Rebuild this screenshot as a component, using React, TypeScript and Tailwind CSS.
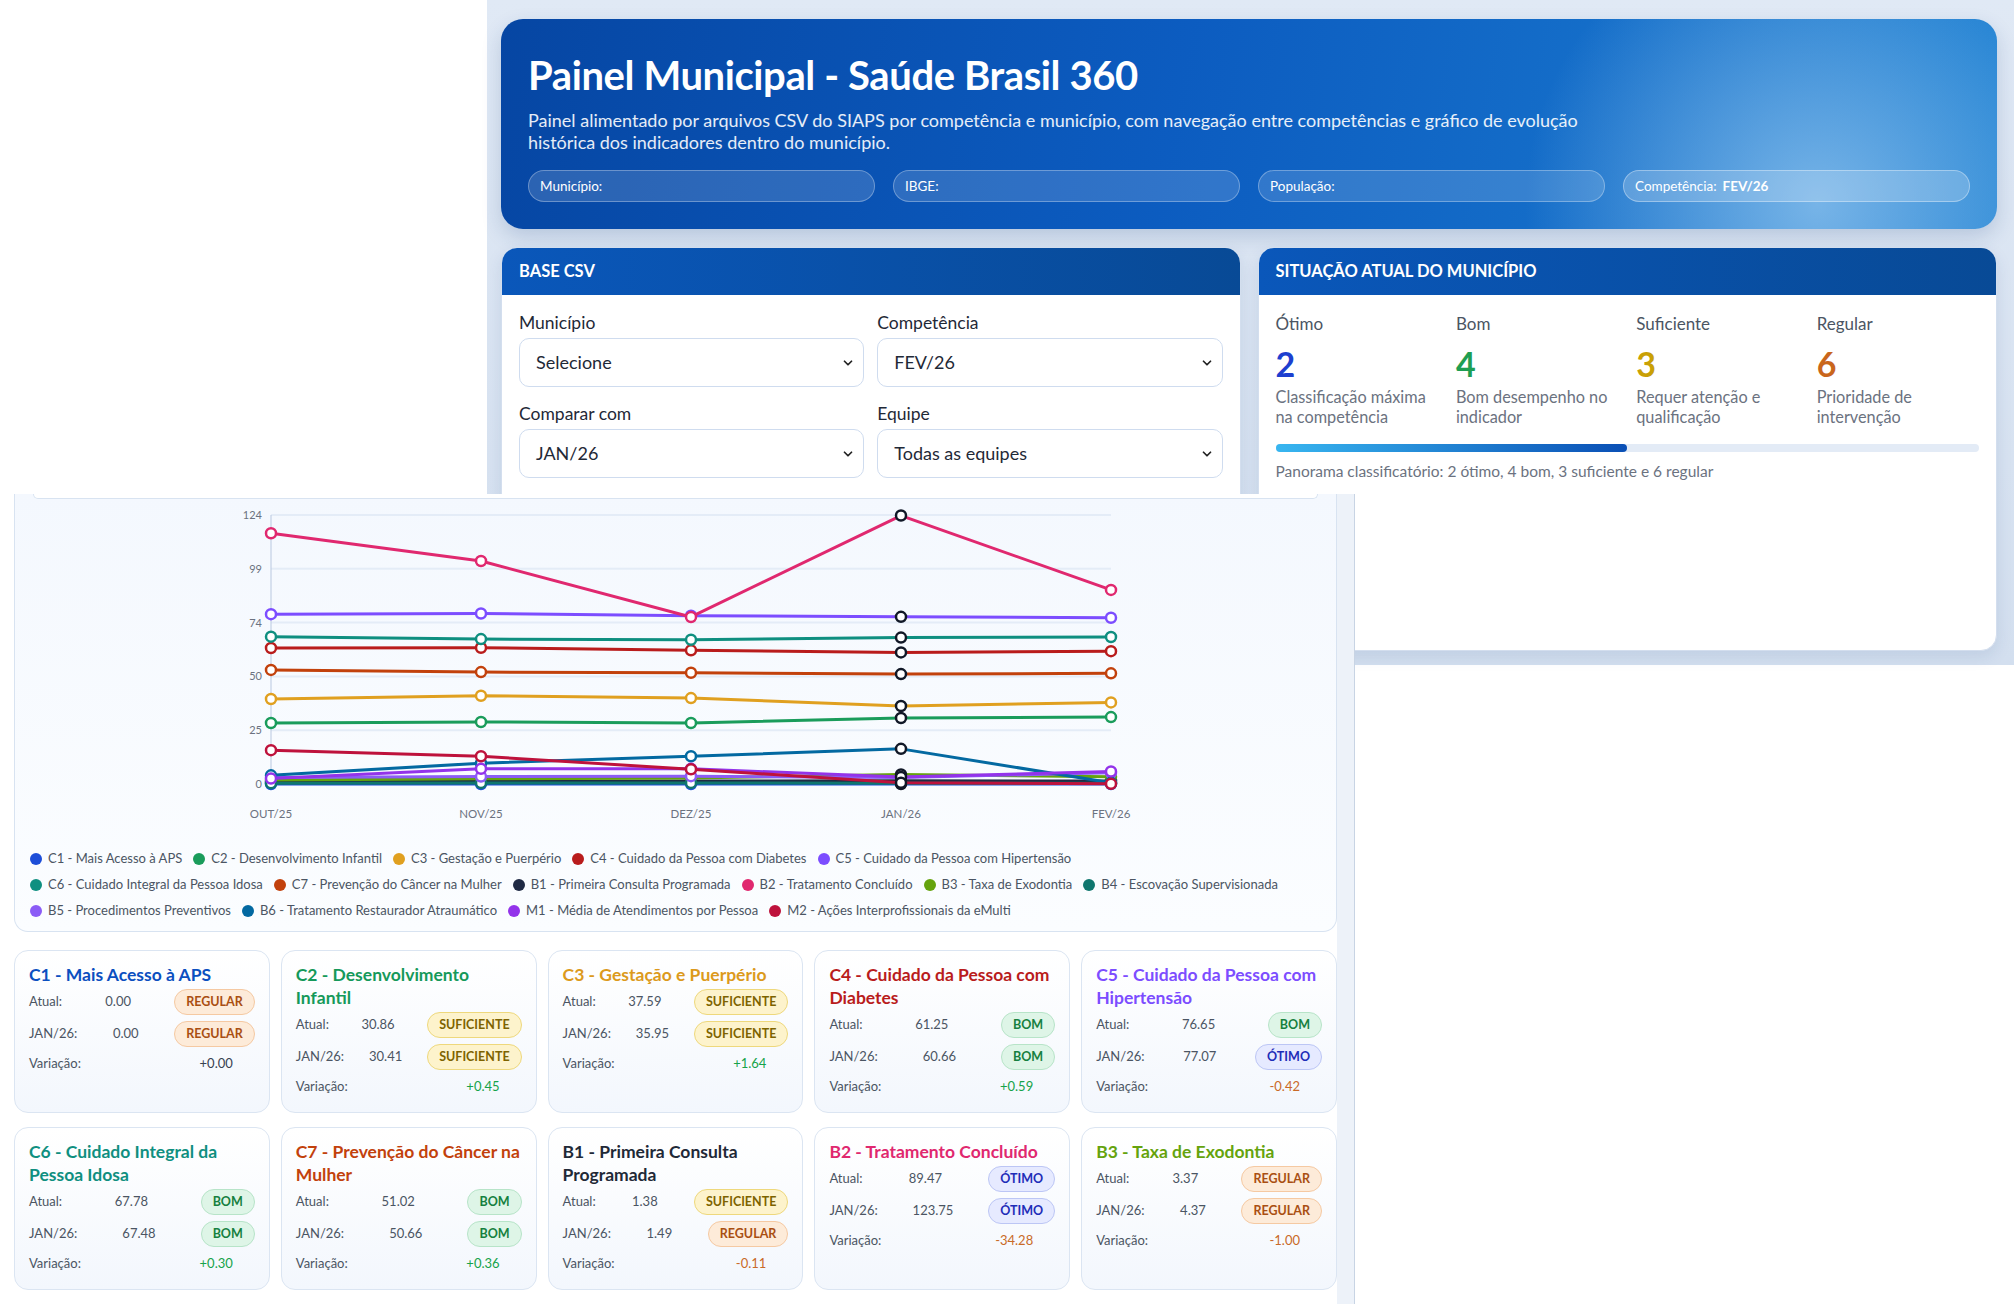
import { ChevronDown } from 'lucide-react';

const months = ['OUT/25', 'NOV/25', 'DEZ/25', 'JAN/26', 'FEV/26'];

interface Series {
  name: string;
  color: string;
  data: number[];
}

const series: Series[] = [
  { name: 'C1 - Mais Acesso à APS', color: '#1d4ed8', data: [0, 0, 0, 0, 0] },
  { name: 'C2 - Desenvolvimento Infantil', color: '#1a9c5b', data: [28.1, 28.6, 28.1, 30.41, 30.86] },
  { name: 'C3 - Gestação e Puerpério', color: '#e0a020', data: [39.2, 40.7, 39.6, 35.95, 37.59] },
  { name: 'C4 - Cuidado da Pessoa com Diabetes', color: '#b91c1c', data: [62.7, 62.8, 61.6, 60.66, 61.25] },
  { name: 'C5 - Cuidado da Pessoa com Hipertensão', color: '#7c4dff', data: [78.3, 78.6, 77.6, 77.07, 76.65] },
  { name: 'C6 - Cuidado Integral da Pessoa Idosa', color: '#0f8f80', data: [67.9, 66.8, 66.5, 67.48, 67.78] },
  { name: 'C7 - Prevenção do Câncer na Mulher', color: '#c2410c', data: [52.6, 51.6, 51.3, 50.66, 51.02] },
  { name: 'B1 - Primeira Consulta Programada', color: '#1f2a44', data: [1.2, 1.3, 1.4, 1.49, 1.38] },
  { name: 'B2 - Tratamento Concluído', color: '#e0286f', data: [115.6, 102.8, 77.0, 123.75, 89.47] },
  { name: 'B3 - Taxa de Exodontia', color: '#65a30d', data: [1.8, 2.4, 2.8, 4.37, 3.37] },
  { name: 'B4 - Escovação Supervisionada', color: '#0f766e', data: [0.4, 0.5, 0.5, 0.3, 0.4] },
  { name: 'B5 - Procedimentos Preventivos', color: '#8b5cf6', data: [3.0, 3.4, 3.6, 3.0, 5.2] },
  { name: 'B6 - Tratamento Restaurador Atraumático', color: '#0369a1', data: [4.0, 9.6, 12.8, 16.2, 0.6] },
  { name: 'M1 - Média de Atendimentos por Pessoa', color: '#9333ea', data: [2.5, 7.0, 7.0, 3.2, 5.8] },
  { name: 'M2 - Ações Interprofissionais da eMulti', color: '#be123c', data: [15.6, 12.8, 6.8, 0.6, 0.1] },
];

const legendRows = [
  [0, 1, 2, 3, 4],
  [5, 6, 7, 8, 9, 10],
  [11, 12, 13, 14],
];

type Level = 'REGULAR' | 'SUFICIENTE' | 'BOM' | 'ÓTIMO';

const badgeStyles: Record<Level, string> = {
  REGULAR: 'bg-[#fdebd9] border-[#f5c9a2] text-[#a94f12]',
  SUFICIENTE: 'bg-[#fdf3cc] border-[#eed87c] text-[#7d6300]',
  BOM: 'bg-[#def5e7] border-[#b7e4c8] text-[#16803f]',
  ÓTIMO: 'bg-[#e6eaff] border-[#bcc6f5] text-[#1e2db8]',
};

interface Indicator {
  title: string;
  color: string;
  atual: string;
  atualLevel: Level;
  prev: string;
  prevLevel: Level;
  diff: string;
}

const indicators: Indicator[] = [
  { title: 'C1 - Mais Acesso à APS', color: '#0b4fc0', atual: '0.00', atualLevel: 'REGULAR', prev: '0.00', prevLevel: 'REGULAR', diff: '+0.00' },
  { title: 'C2 - Desenvolvimento Infantil', color: '#15995a', atual: '30.86', atualLevel: 'SUFICIENTE', prev: '30.41', prevLevel: 'SUFICIENTE', diff: '+0.45' },
  { title: 'C3 - Gestação e Puerpério', color: '#dc9a1c', atual: '37.59', atualLevel: 'SUFICIENTE', prev: '35.95', prevLevel: 'SUFICIENTE', diff: '+1.64' },
  { title: 'C4 - Cuidado da Pessoa com Diabetes', color: '#b91c1c', atual: '61.25', atualLevel: 'BOM', prev: '60.66', prevLevel: 'BOM', diff: '+0.59' },
  { title: 'C5 - Cuidado da Pessoa com Hipertensão', color: '#7c4dff', atual: '76.65', atualLevel: 'BOM', prev: '77.07', prevLevel: 'ÓTIMO', diff: '-0.42' },
  { title: 'C6 - Cuidado Integral da Pessoa Idosa', color: '#0f8f80', atual: '67.78', atualLevel: 'BOM', prev: '67.48', prevLevel: 'BOM', diff: '+0.30' },
  { title: 'C7 - Prevenção do Câncer na Mulher', color: '#c2410c', atual: '51.02', atualLevel: 'BOM', prev: '50.66', prevLevel: 'BOM', diff: '+0.36' },
  { title: 'B1 - Primeira Consulta Programada', color: '#1f2937', atual: '1.38', atualLevel: 'SUFICIENTE', prev: '1.49', prevLevel: 'REGULAR', diff: '-0.11' },
  { title: 'B2 - Tratamento Concluído', color: '#e0286f', atual: '89.47', atualLevel: 'ÓTIMO', prev: '123.75', prevLevel: 'ÓTIMO', diff: '-34.28' },
  { title: 'B3 - Taxa de Exodontia', color: '#65a30d', atual: '3.37', atualLevel: 'REGULAR', prev: '4.37', prevLevel: 'REGULAR', diff: '-1.00' },
];

const statusCols = [
  { label: 'Ótimo', value: 2, color: 'text-[#1d3fcf]', desc: 'Classificação máxima na competência' },
  { label: 'Bom', value: 4, color: 'text-[#1e9e52]', desc: 'Bom desempenho no indicador' },
  { label: 'Suficiente', value: 3, color: 'text-[#c9a005]', desc: 'Requer atenção e qualificação' },
  { label: 'Regular', value: 6, color: 'text-[#c9661c]', desc: 'Prioridade de intervenção' },
];

// chart geometry (px inside the svg)
const X0 = 256;
const XSTEP = 210;
const Y0 = 285;
const YMAX = 124;
const YSPAN = 269;
const yOf = (v: number) => Y0 - (v / YMAX) * YSPAN;

function Select({ value }: { value: string }) {
  return (
    <div className="mt-[3px] flex h-[49px] items-center justify-between rounded-[10px] border-[1.5px] border-[#cfdcef] bg-white pl-[16px] pr-[8px] text-[18px] text-[#1f2937]">
      <span>{value}</span>
      <ChevronDown size={14} strokeWidth={3} className="text-[#222]" />
    </div>
  );
}

function Field({ label, value }: { label: string; value: string }) {
  return (
    <div>
      <div className="text-[17.5px] leading-[24px] text-[#1f2937]">{label}</div>
      <Select value={value} />
    </div>
  );
}

function Chart() {
  return (
    <svg width="1321" height="347" className="block">
      {[0, 1, 2, 3, 4, 5].map((k) => {
        const y = Y0 - k * (YSPAN / 5);
        return (
          <g key={k}>
            <line x1={X0} x2={X0 + XSTEP * 4} y1={y} y2={y} stroke="#e4ecf7" strokeWidth={2} />
            <text x={X0 - 9} y={y + 4} textAnchor="end" fontSize="11" fill="#6b7280">
              {Math.round((YMAX * k) / 5)}
            </text>
          </g>
        );
      })}
      <line x1={X0} x2={X0} y1={Y0 - YSPAN} y2={Y0} stroke="#b9c8e0" strokeWidth={1} />
      {months.map((m, i) => (
        <text key={m} x={X0 + i * XSTEP} y={319} textAnchor="middle" fontSize="11.5" fill="#6b7280">
          {m}
        </text>
      ))}
      {series.map((s) => (
        <g key={s.name}>
          <polyline
            points={s.data.map((v, i) => `${X0 + i * XSTEP},${yOf(v)}`).join(' ')}
            fill="none"
            stroke={s.color}
            strokeWidth={3}
            strokeLinejoin="round"
          />
          {s.data.map((v, i) => (
            <circle
              key={i}
              cx={X0 + i * XSTEP}
              cy={yOf(v)}
              r={5}
              fill="#fff"
              stroke={i === 3 ? '#111827' : s.color}
              strokeWidth={2.5}
            />
          ))}
        </g>
      ))}
    </svg>
  );
}

function Badge({ level }: { level: Level }) {
  return (
    <span className={`flex h-[26px] items-center rounded-full border px-[11px] text-[12.5px] font-bold ${badgeStyles[level]}`}>
      {level}
    </span>
  );
}

function IndicatorCard({ item }: { item: Indicator }) {
  const diffColor = item.diff === '+0.00' ? 'text-[#374151]' : item.diff.startsWith('+') ? 'text-[#16a34a]' : 'text-[#c96a28]';
  return (
    <div className="rounded-[14px] border border-[#dbe5f2] bg-[linear-gradient(180deg,#ffffff,#f3f7fd)] px-[14px] pb-[14px] pt-[12px]">
      <div className="text-[17.5px] font-bold leading-[23px]" style={{ color: item.color }}>
        {item.title}
      </div>
      <div className="mt-[3px] flex flex-col gap-[6px] text-[13px] text-[#4b5563]">
        <div className="flex h-[26px] items-center justify-between">
          <span>Atual:</span>
          <span>{item.atual}</span>
          <Badge level={item.atualLevel} />
        </div>
        <div className="flex h-[26px] items-center justify-between">
          <span>JAN/26:</span>
          <span>{item.prev}</span>
          <Badge level={item.prevLevel} />
        </div>
        <div className="flex h-[22px] items-center justify-between">
          <span>Variação:</span>
          <span className={`mr-[22px] ${diffColor}`}>{item.diff}</span>
        </div>
      </div>
    </div>
  );
}

export default function App() {
  return (
    <div className="relative h-[1304px] w-[2014px] overflow-hidden bg-white [font-family:Lato,'Noto_Sans',sans-serif]">
      {/* upper capture: header and filters */}
      <div className="absolute left-[487px] top-0 h-[665px] w-[1527px] bg-[linear-gradient(180deg,#e0e9f5,#d3dfef)] pl-[14px] pr-[17px] pt-[19px]">
        <div className="h-[210px] rounded-[22px] bg-[radial-gradient(circle_at_88%_88%,rgba(150,200,240,0.75),transparent_22%),linear-gradient(100deg,#0646a3_0%,#0c5cc0_45%,#1d80d2_100%)] px-[27px] pt-[32px] text-white shadow-[0_8px_20px_rgba(20,60,120,0.18)]">
          <h1 className="text-[40px] font-bold leading-[48px] tracking-[-0.01em]">Painel Municipal - Saúde Brasil 360</h1>
          <p className="mt-[10px] text-[18px] leading-[22px] text-white/90">
            Painel alimentado por arquivos CSV do SIAPS por competência e município, com navegação entre competências e gráfico de evolução
            <br />
            histórica dos indicadores dentro do município.
          </p>
          <div className="mt-[17px] flex gap-[18px]">
            {['Município:', 'IBGE:', 'População:'].map((p) => (
              <div key={p} className="flex h-[32px] flex-1 items-center rounded-full border border-white/30 bg-white/15 px-[11px] text-[13.5px]">
                {p}
              </div>
            ))}
            <div className="flex h-[32px] flex-1 items-center gap-[6px] rounded-full border border-white/35 bg-white/20 px-[11px] text-[13.5px]">
              Competência: <b>FEV/26</b>
            </div>
          </div>
        </div>

        <div className="mt-[18px] grid h-[404px] grid-cols-2 gap-[17px]">
          <div className="overflow-hidden rounded-[16px] border border-[#d3deee] bg-white shadow-[0_6px_16px_rgba(20,60,120,0.10)]">
            <div className="flex h-[47px] items-center bg-[linear-gradient(90deg,#0a57ba,#084a96)] px-[17px] text-[16.5px] font-bold text-white">
              BASE CSV
            </div>
            <div className="grid grid-cols-2 gap-x-[13px] gap-y-[15px] px-[17px] pt-[16px]">
              <Field label="Município" value="Selecione" />
              <Field label="Competência" value="FEV/26" />
              <Field label="Comparar com" value="JAN/26" />
              <Field label="Equipe" value="Todas as equipes" />
            </div>
          </div>

          <div className="overflow-hidden rounded-[16px] border border-[#d3deee] bg-white shadow-[0_6px_16px_rgba(20,60,120,0.10)]">
            <div className="flex h-[47px] items-center bg-[linear-gradient(90deg,#0a57ba,#084a96)] px-[17px] text-[16.5px] font-bold text-white">
              SITUAÇÃO ATUAL DO MUNICÍPIO
            </div>
            <div className="px-[17px] pt-[17px]">
              <div className="grid grid-cols-4 gap-x-[18px]">
                {statusCols.map((c) => (
                  <div key={c.label}>
                    <div className="text-[17px] leading-[24px] text-[#4b5563]">{c.label}</div>
                    <div className={`mt-[8px] text-[34px] font-bold leading-[40px] ${c.color}`}>{c.value}</div>
                    <div className="mt-[3px] text-[16.3px] leading-[20px] text-[#6b7280]">{c.desc}</div>
                  </div>
                ))}
              </div>
              <div className="mt-[17px] h-[8px] rounded-full bg-[#e3ebf6]">
                <div className="h-full w-1/2 rounded-full bg-[linear-gradient(90deg,#38b6f0,#0a4fb5)]" />
              </div>
              <div className="mt-[9px] text-[15.5px] leading-[20px] text-[#6b7280]">
                Panorama classificatório: 2 ótimo, 4 bom, 3 suficiente e 6 regular
              </div>
            </div>
          </div>
        </div>
      </div>

      {/* lower capture: chart and indicator cards */}
      <div className="absolute left-0 top-[494px] flex h-[810px] w-[1355px] overflow-hidden">
        <div className="w-[1337px] shrink-0 bg-white pl-[14px]">
          <div className="rounded-b-[14px] border border-t-0 border-[#d8e3f1] bg-[linear-gradient(180deg,#f4f8fe,#fbfdff)]">
            <div className="mx-[18px] h-[5px] rounded-b-[12px] border-x border-b border-[#d8e3f1] bg-white" />
            <Chart />
            <div className="flex flex-col pb-[7px] pl-[15px] text-[13px] text-[#4b5563]">
              {legendRows.map((row, r) => (
                <div key={r} className="flex h-[26px] items-center gap-x-[11px]">
                  {row.map((idx) => (
                    <div key={idx} className="flex items-center gap-[6px]">
                      <span className="h-[12px] w-[12px] rounded-full" style={{ backgroundColor: series[idx].color }} />
                      <span>{series[idx].name}</span>
                    </div>
                  ))}
                </div>
              ))}
            </div>
          </div>

          <div className="mt-[18px] grid grid-cols-5 gap-x-[11px] gap-y-[14px]">
            {indicators.map((item) => (
              <IndicatorCard key={item.title} item={item} />
            ))}
            {[0, 1, 2, 3, 4].map((k) => (
              <div key={k} className="h-[160px] rounded-[14px] border border-[#dbe5f2] bg-white" />
            ))}
          </div>
        </div>
        <div className="flex-1 border-r border-[#c8d4e4] bg-[#edf2f9]" />
      </div>
    </div>
  );
}
